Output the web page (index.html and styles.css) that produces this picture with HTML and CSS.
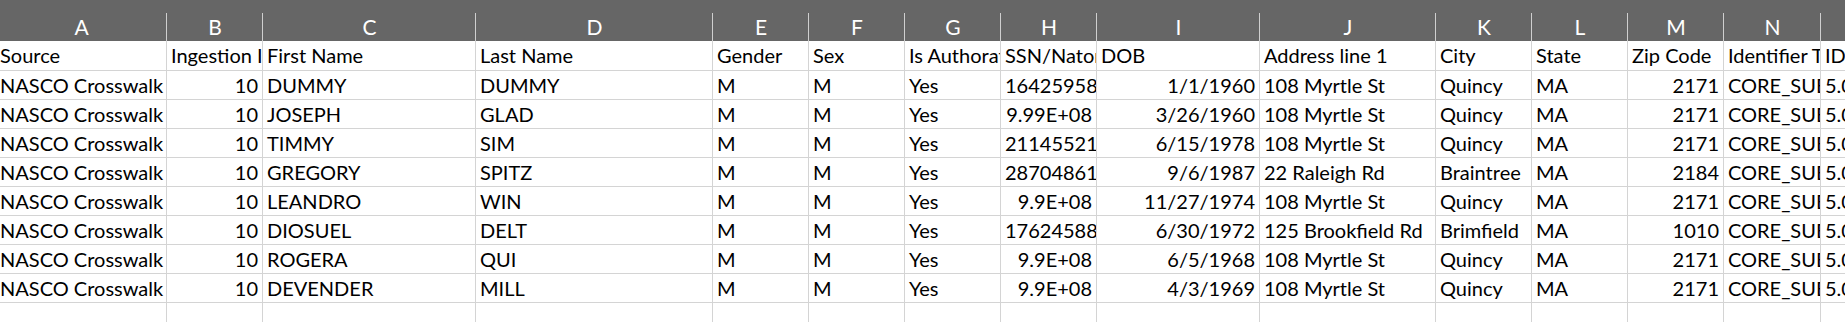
FILE: index.html
```html
<!DOCTYPE html>
<html lang="en">
<head>
<meta charset="utf-8">
<title>Sheet</title>
<link rel="stylesheet" href="styles.css">
</head>
<body>
<div class="sheet">
  <div class="colhead">A</div><div class="colhead">B</div><div class="colhead">C</div><div class="colhead">D</div><div class="colhead">E</div><div class="colhead">F</div><div class="colhead">G</div><div class="colhead">H</div><div class="colhead">I</div><div class="colhead">J</div><div class="colhead">K</div><div class="colhead">L</div><div class="colhead">M</div><div class="colhead">N</div><div class="colhead">O</div>

  <div class="cell title">Source</div><div class="cell title">Ingestion ID</div><div class="cell title">First Name</div><div class="cell title">Last Name</div><div class="cell title">Gender</div><div class="cell title">Sex</div><div class="cell title">Is Authorative</div><div class="cell title">SSN/Natoral ID</div><div class="cell title">DOB</div><div class="cell title">Address line 1</div><div class="cell title">City</div><div class="cell title">State</div><div class="cell title">Zip Code</div><div class="cell title">Identifier Type</div><div class="cell title">ID</div>

  <div class="cell">NASCO Crosswalk</div><div class="cell num">10</div><div class="cell">DUMMY</div><div class="cell">DUMMY</div><div class="cell">M</div><div class="cell">M</div><div class="cell">Yes</div><div class="cell">16425958</div><div class="cell num">1/1/1960</div><div class="cell">108 Myrtle St</div><div class="cell">Quincy</div><div class="cell">MA</div><div class="cell num">2171</div><div class="cell">CORE_SUBSCRIBER</div><div class="cell">5.02E+08</div>

  <div class="cell">NASCO Crosswalk</div><div class="cell num">10</div><div class="cell">JOSEPH</div><div class="cell">GLAD</div><div class="cell">M</div><div class="cell">M</div><div class="cell">Yes</div><div class="cell num">9.99E+08</div><div class="cell num">3/26/1960</div><div class="cell">108 Myrtle St</div><div class="cell">Quincy</div><div class="cell">MA</div><div class="cell num">2171</div><div class="cell">CORE_SUBSCRIBER</div><div class="cell">5.02E+08</div>

  <div class="cell">NASCO Crosswalk</div><div class="cell num">10</div><div class="cell">TIMMY</div><div class="cell">SIM</div><div class="cell">M</div><div class="cell">M</div><div class="cell">Yes</div><div class="cell">21145521</div><div class="cell num">6/15/1978</div><div class="cell">108 Myrtle St</div><div class="cell">Quincy</div><div class="cell">MA</div><div class="cell num">2171</div><div class="cell">CORE_SUBSCRIBER</div><div class="cell">5.02E+08</div>

  <div class="cell">NASCO Crosswalk</div><div class="cell num">10</div><div class="cell">GREGORY</div><div class="cell">SPITZ</div><div class="cell">M</div><div class="cell">M</div><div class="cell">Yes</div><div class="cell">28704861</div><div class="cell num">9/6/1987</div><div class="cell">22 Raleigh Rd</div><div class="cell">Braintree</div><div class="cell">MA</div><div class="cell num">2184</div><div class="cell">CORE_SUBSCRIBER</div><div class="cell">5.02E+08</div>

  <div class="cell">NASCO Crosswalk</div><div class="cell num">10</div><div class="cell">LEANDRO</div><div class="cell">WIN</div><div class="cell">M</div><div class="cell">M</div><div class="cell">Yes</div><div class="cell num">9.9E+08</div><div class="cell num">11/27/1974</div><div class="cell">108 Myrtle St</div><div class="cell">Quincy</div><div class="cell">MA</div><div class="cell num">2171</div><div class="cell">CORE_SUBSCRIBER</div><div class="cell">5.02E+08</div>

  <div class="cell">NASCO Crosswalk</div><div class="cell num">10</div><div class="cell">DIOSUEL</div><div class="cell">DELT</div><div class="cell">M</div><div class="cell">M</div><div class="cell">Yes</div><div class="cell">17624588</div><div class="cell num">6/30/1972</div><div class="cell">125 Brookfield Rd</div><div class="cell">Brimfield</div><div class="cell">MA</div><div class="cell num">1010</div><div class="cell">CORE_SUBSCRIBER</div><div class="cell">5.02E+08</div>

  <div class="cell">NASCO Crosswalk</div><div class="cell num">10</div><div class="cell">ROGERA</div><div class="cell">QUI</div><div class="cell">M</div><div class="cell">M</div><div class="cell">Yes</div><div class="cell num">9.9E+08</div><div class="cell num">6/5/1968</div><div class="cell">108 Myrtle St</div><div class="cell">Quincy</div><div class="cell">MA</div><div class="cell num">2171</div><div class="cell">CORE_SUBSCRIBER</div><div class="cell">5.02E+08</div>

  <div class="cell">NASCO Crosswalk</div><div class="cell num">10</div><div class="cell">DEVENDER</div><div class="cell">MILL</div><div class="cell">M</div><div class="cell">M</div><div class="cell">Yes</div><div class="cell num">9.9E+08</div><div class="cell num">4/3/1969</div><div class="cell">108 Myrtle St</div><div class="cell">Quincy</div><div class="cell">MA</div><div class="cell num">2171</div><div class="cell">CORE_SUBSCRIBER</div><div class="cell">5.02E+08</div>

  <div class="cell"></div><div class="cell"></div><div class="cell"></div><div class="cell"></div><div class="cell"></div><div class="cell"></div><div class="cell"></div><div class="cell"></div><div class="cell"></div><div class="cell"></div><div class="cell"></div><div class="cell"></div><div class="cell"></div><div class="cell"></div><div class="cell"></div>
</div>
</body>
</html>
```

FILE: styles.css
```css
html, body {
  margin: 0;
  padding: 0;
  background: #ffffff;
  overflow: hidden;
}

.sheet {
  display: grid;
  grid-template-columns: 171px 96px 213px 237px 96px 96px 96px 96px 163px 176px 96px 96px 96px 97px 120px;
  width: max-content;
  margin-left: -4px;
  font-family: Lato, "Open Sans", sans-serif;
  color: #000000;
}

.colhead {
  box-sizing: border-box;
  height: 41px;
  padding-top: 13px;
  line-height: 28px;
  font-size: 21px;
  text-align: center;
  color: #ffffff;
  background-color: #666666;
  background-image: linear-gradient(#cfcfcf, #cfcfcf);
  background-repeat: no-repeat;
  background-position: right bottom;
  background-size: 1px 28px;
}

.cell {
  box-sizing: border-box;
  height: 29px;
  padding: 0 4px;
  border-right: 1px solid #d4d4d4;
  border-bottom: 1px solid #d4d4d4;
  font-size: 20px;
  line-height: 28px;
  white-space: nowrap;
  overflow: hidden;
}

.cell.title {
  height: 30px;
  line-height: 29px;
}

.num {
  text-align: right;
}
```
